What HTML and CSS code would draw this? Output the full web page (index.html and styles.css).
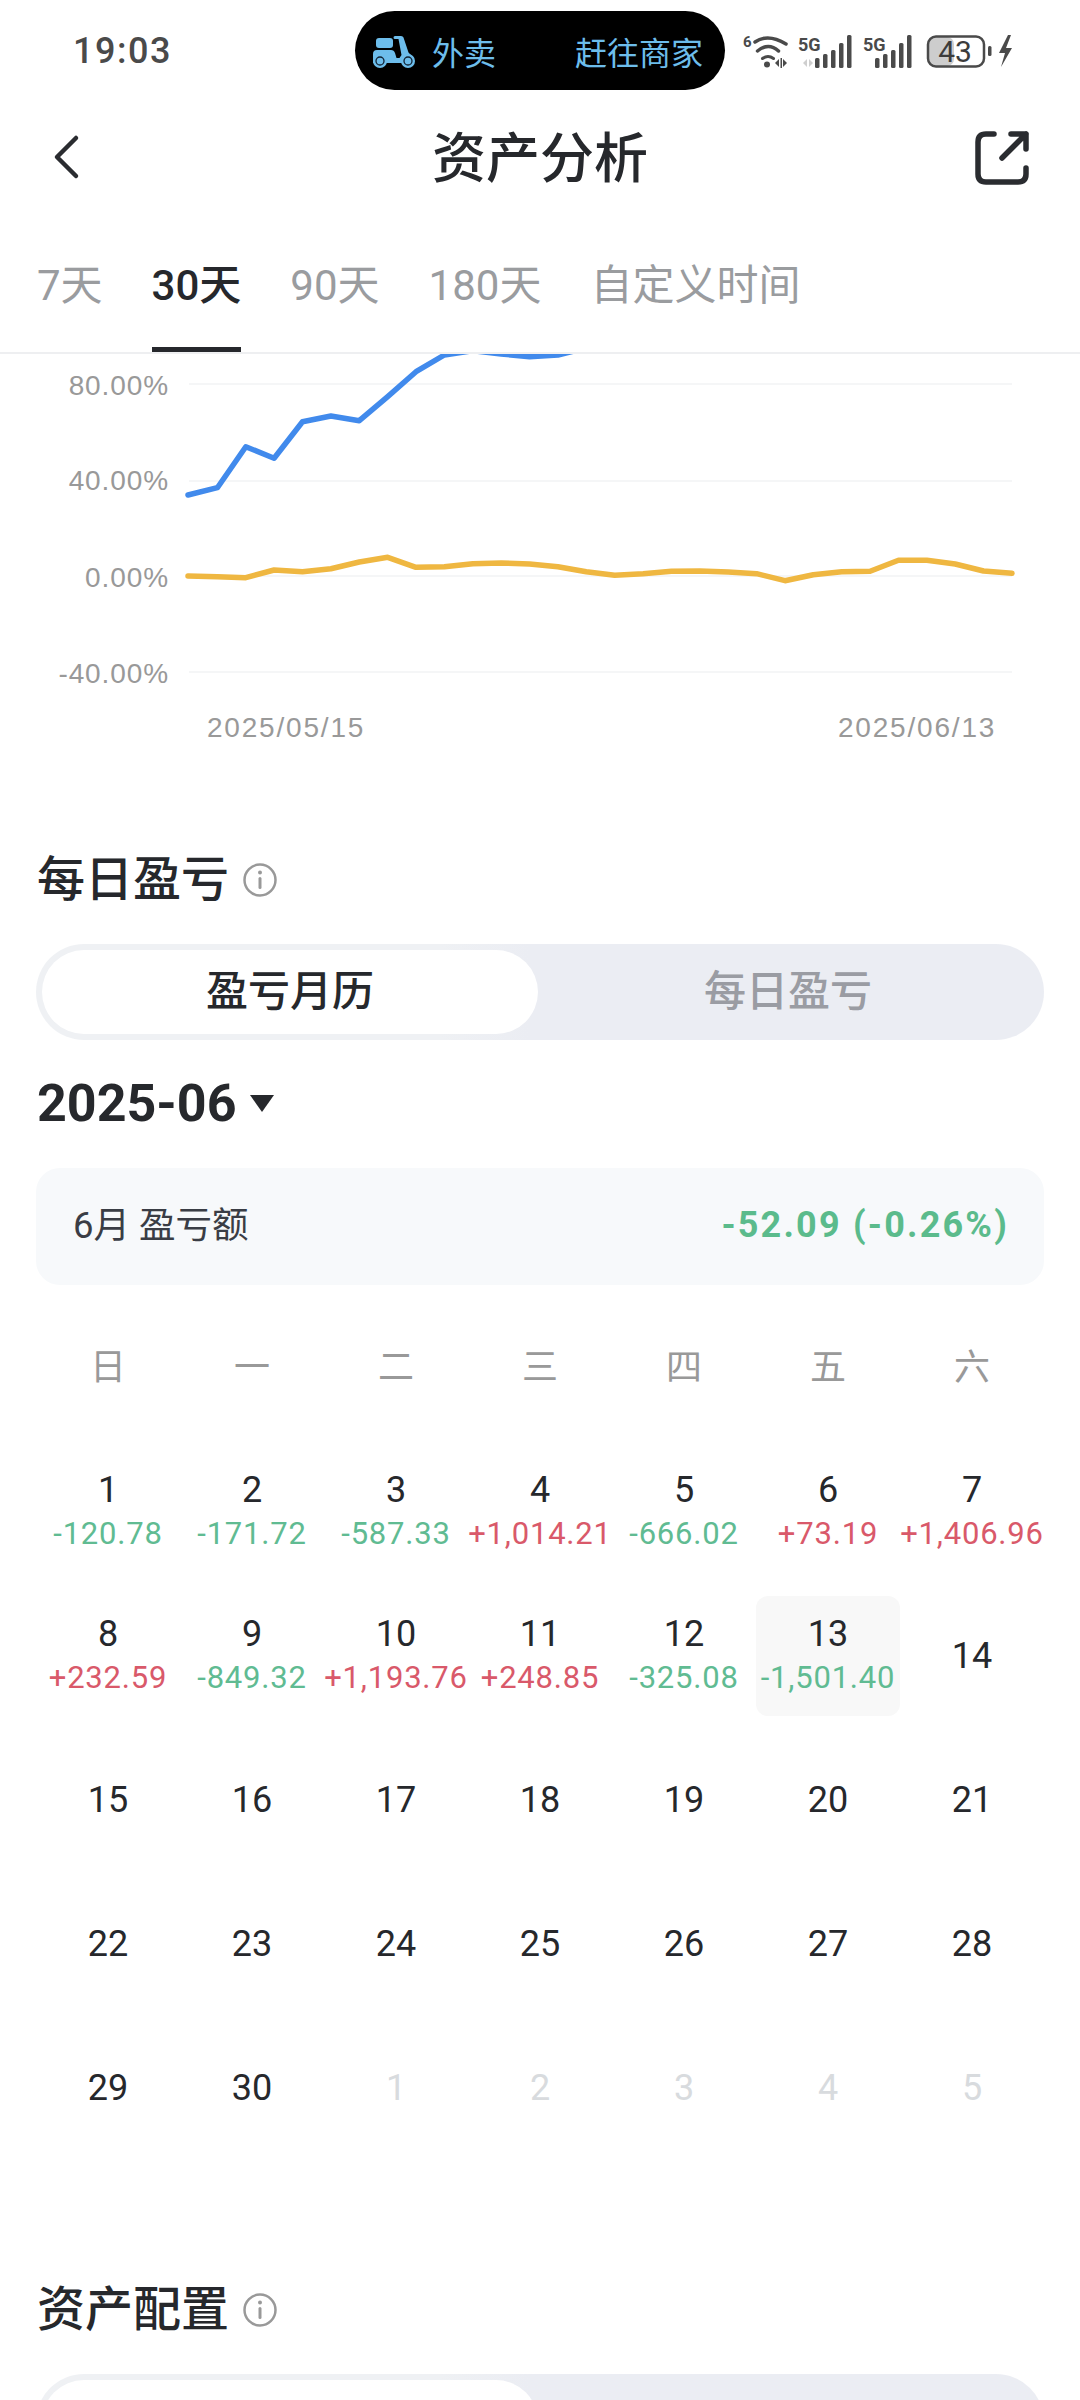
FILE: index.html
```html
<!DOCTYPE html>
<html lang="zh-CN">
<head>
    <meta charset="UTF-8">
    <meta name="viewport" content="width=device-width, initial-scale=1.0">
    <title>资产分析</title>
    <link rel="stylesheet" href="styles.css">
</head>
<body>

    <!-- Status bar -->
    <div class="status-bar">
        <span class="time">19:03</span>
        <div class="pill">
            <span class="pill-left">
                <svg class="scooter" viewBox="373 33 44 34" width="44" height="34">
                    <rect x="376" y="37" width="17" height="10" rx="3" fill="#6dbdeb"/>
                    <path d="M373 62v-9q0-4 4-4h14q3 0 4 3l1.500 5h3l2-3-3-16h-3.500q-1.500 0-1.500-1.500t1.500-1.500h6q2 0 2.500 1.500l5 15 5 5v5.500h-40.500z" fill="#6dbdeb"/>
                    <circle cx="380" cy="60" r="7" fill="#6dbdeb"/>
                    <circle cx="408" cy="60" r="7" fill="#6dbdeb"/>
                    <circle cx="380" cy="60" r="4" fill="none" stroke="#123" stroke-width="1.300"/>
                    <circle cx="408" cy="60" r="4" fill="none" stroke="#123" stroke-width="1.300"/>
                </svg>
                外卖
            </span>
            <span>赶往商家</span>
        </div>
        <svg class="status-icons" viewBox="740 30 275 40" width="275" height="40">
            <text class="net" x="743" y="46" font-size="15">6</text>
            <g fill="none" stroke="#4a4a4a" stroke-linecap="round">
                <path d="M755 41q13-9 31 2" stroke-width="3.500"/>
                <path d="M757.500 50q11-9 21 0" stroke-width="3.500"/>
                <path d="M762.500 57.500q5.500-4 11 0" stroke-width="3"/>
            </g>
            <g fill="#4a4a4a">
                <circle cx="767" cy="63.500" r="3"/>
                <path d="M775 62l4-4v8zM783 58l4 4-4 4z"/>
                <rect x="780.500" y="57" width="1.500" height="10"/>
                <path d="M803 62l4-4v8zM809 58l4 4-4 4z" fill="#cfcfcf"/>
                <rect x="815" y="57" width="4.500" height="10" rx="1.500"/>
                <rect x="823" y="53" width="4.500" height="14" rx="1.500"/>
                <rect x="831" y="49" width="4.500" height="18" rx="1.500"/>
                <rect x="839" y="42" width="4.500" height="25" rx="1.500"/>
                <rect x="847" y="34" width="4.500" height="33" rx="1.500"/>
                <rect x="875" y="57" width="4.500" height="10" rx="1.500"/>
                <rect x="883" y="53" width="4.500" height="14" rx="1.500"/>
                <rect x="891" y="49" width="4.500" height="18" rx="1.500"/>
                <rect x="899" y="42" width="4.500" height="25" rx="1.500"/>
                <rect x="907" y="34" width="4.500" height="33" rx="1.500"/>
                <rect x="988" y="45" width="3.500" height="10" rx="1.500"/>
                <path d="M1008 34l-9 18h6l-4 14 11-19h-6l5-13z"/>
            </g>
            <text class="net" x="798" y="50" font-size="18">5G</text>
            <text class="net" x="863" y="50" font-size="18">5G</text>
            <rect x="929" y="36" width="25" height="29" rx="7" fill="#cdcdcd"/>
            <rect x="928" y="35.500" width="56" height="30" rx="8" fill="none" stroke="#4a4a4a" stroke-width="2.500"/>
            <text class="batt" x="955" y="61" text-anchor="middle" font-size="30">43</text>
        </svg>
    </div>

    <!-- Title row -->
    <div class="nav">
        <svg class="back" viewBox="50 132 30 50" width="30" height="50">
            <path d="M76 137L57 156l19 19" fill="none" stroke="#2a2c30" stroke-width="4.500" stroke-linecap="round" stroke-linejoin="round"/>
        </svg>
        <h1>资产分析</h1>
        <svg class="share" viewBox="970 127 60 60" width="60" height="60">
            <path d="M994 133h-8q-8 0-8 8v32q0 8 8 8h32q8 0 8-8v-6M1011 133h15v15M1026 133l-24 24" fill="none" stroke="#2a2c30" stroke-width="5.500" stroke-linecap="round" stroke-linejoin="round"/>
        </svg>
    </div>

    <!-- Range tabs -->
    <div class="tabs">
        <span class="tab">7天</span>
        <span class="tab active">30天</span>
        <span class="tab">90天</span>
        <span class="tab">180天</span>
        <span class="tab">自定义时间</span>
    </div>

    <!-- Line chart, coordinates are page pixels -->
    <svg class="chart" viewBox="0 354 1080 406" width="1080" height="406">
        <g stroke="#f5f6f7" stroke-width="2">
            <line x1="189" y1="384" x2="1012" y2="384"/>
            <line x1="189" y1="481" x2="1012" y2="481"/>
            <line x1="189" y1="576" x2="1012" y2="576"/>
            <line x1="189" y1="672" x2="1012" y2="672"/>
        </g>
        <g class="axis" text-anchor="end">
            <text x="169" y="395">80.00%</text>
            <text x="169" y="490">40.00%</text>
            <text x="169" y="587">0.00%</text>
            <text x="169" y="683">-40.00%</text>
        </g>
        <text class="axis-date" x="207" y="737">2025/05/15</text>
        <text class="axis-date" x="838" y="737">2025/06/13</text>
        <polyline class="line-blue" points="188,495 217.400,487.700 245.800,446.700 274.100,458.300 302.500,421.700 330.900,416 359.300,420.700 387.700,396.700 416,371.700 444.400,355 472.800,350.700 501.200,354 529.600,356.700 557.900,355 586.300,348"/>
        <polyline class="line-yellow" points="188,576 217.400,576.700 245.800,577.700 274.100,570 302.500,571.700 330.900,568.700 359.300,562 387.700,557.300 416,567.300 444.400,566.700 472.800,563.700 501.200,563 529.600,564 557.900,566.700 586.300,571.700 614.700,575.300 643.100,573.700 671.400,571.300 699.800,571 728.200,572 756.600,573.700 785,580.700 813.300,574.700 841.700,571.700 870.100,571.300 898.500,560.300 926.900,560.300 955.200,564 983.600,571 1012,573.300"/>
    </svg>

    <div class="content">
        <!-- Daily profit and loss -->
        <div class="section-title section-daily">
            <h2>每日盈亏</h2>
            <svg class="info" viewBox="0 0 36 36" width="36" height="36">
                <circle cx="18" cy="18" r="15.500" fill="none" stroke="#999" stroke-width="2.500"/>
                <circle cx="18" cy="10.500" r="2" fill="#999"/>
                <rect x="16.500" y="15" width="3" height="12" rx="1.500" fill="#999"/>
            </svg>
        </div>

        <div class="segment">
            <div class="segment-item active">盈亏月历</div>
            <div class="segment-item">每日盈亏</div>
        </div>

        <div class="month">2025-06<span class="caret"></span></div>

        <div class="summary">
            <span class="summary-label">6月 盈亏额</span>
            <span class="summary-value">-52.09 (-0.26%)</span>
        </div>

        <div class="weekdays">
            <span>日</span><span>一</span><span>二</span><span>三</span><span>四</span><span>五</span><span>六</span>
        </div>

        <div class="days">
            <div class="day"><span class="num">1</span><span class="val down">-120.78</span></div>
            <div class="day"><span class="num">2</span><span class="val down">-171.72</span></div>
            <div class="day"><span class="num">3</span><span class="val down">-587.33</span></div>
            <div class="day"><span class="num">4</span><span class="val up">+1,014.21</span></div>
            <div class="day"><span class="num">5</span><span class="val down">-666.02</span></div>
            <div class="day"><span class="num">6</span><span class="val up">+73.19</span></div>
            <div class="day"><span class="num">7</span><span class="val up">+1,406.96</span></div>

            <div class="day"><span class="num">8</span><span class="val up">+232.59</span></div>
            <div class="day"><span class="num">9</span><span class="val down">-849.32</span></div>
            <div class="day"><span class="num">10</span><span class="val up">+1,193.76</span></div>
            <div class="day"><span class="num">11</span><span class="val up">+248.85</span></div>
            <div class="day"><span class="num">12</span><span class="val down">-325.08</span></div>
            <div class="day today"><span class="num">13</span><span class="val down">-1,501.40</span></div>
            <div class="day"><span class="num">14</span></div>

            <div class="day"><span class="num">15</span></div>
            <div class="day"><span class="num">16</span></div>
            <div class="day"><span class="num">17</span></div>
            <div class="day"><span class="num">18</span></div>
            <div class="day"><span class="num">19</span></div>
            <div class="day"><span class="num">20</span></div>
            <div class="day"><span class="num">21</span></div>

            <div class="day"><span class="num">22</span></div>
            <div class="day"><span class="num">23</span></div>
            <div class="day"><span class="num">24</span></div>
            <div class="day"><span class="num">25</span></div>
            <div class="day"><span class="num">26</span></div>
            <div class="day"><span class="num">27</span></div>
            <div class="day"><span class="num">28</span></div>

            <div class="day"><span class="num">29</span></div>
            <div class="day"><span class="num">30</span></div>
            <div class="day other"><span class="num">1</span></div>
            <div class="day other"><span class="num">2</span></div>
            <div class="day other"><span class="num">3</span></div>
            <div class="day other"><span class="num">4</span></div>
            <div class="day other"><span class="num">5</span></div>
        </div>

        <!-- Asset allocation, cut off by the screen edge -->
        <div class="section-title section-assets">
            <h2>资产配置</h2>
            <svg class="info" viewBox="0 0 36 36" width="36" height="36">
                <circle cx="18" cy="18" r="15.500" fill="none" stroke="#999" stroke-width="2.500"/>
                <circle cx="18" cy="10.500" r="2" fill="#999"/>
                <rect x="16.500" y="15" width="3" height="12" rx="1.500" fill="#999"/>
            </svg>
        </div>

        <div class="segment">
            <div class="segment-item active"></div>
            <div class="segment-item"></div>
        </div>
    </div>

</body>
</html>
```

FILE: styles.css
```css
body, html {
    margin: 0;
    padding: 0;
    background: #fff;
}

body {
    width: 1080px;
    height: 2400px;
    overflow: hidden;
    color: #26282c;
    font-family: Roboto, "Noto Sans CJK SC", sans-serif;
}

h1, h2 {
    margin: 0;
    font-weight: 500;
}

svg {
    display: block;
}

/* Status bar */
.status-bar {
    display: flex;
    align-items: center;
    height: 79px;
    padding: 11px 0 20px 73px;
}

.time {
    width: 282px;
    color: #4a4a4a;
    font-size: 36px;
    font-weight: 500;
    letter-spacing: 1.500px;
}

.pill {
    display: flex;
    align-items: center;
    justify-content: space-between;
    box-sizing: border-box;
    width: 370px;
    height: 79px;
    margin-right: 15px;
    padding: 0 22px 0 18px;
    background: #000;
    border-radius: 40px;
    color: #6dbdeb;
    font-size: 32px;
}

.pill-left {
    display: flex;
    align-items: center;
    gap: 15px;
}

.net {
    fill: #4a4a4a;
    font-family: Roboto, sans-serif;
    font-weight: 700;
}

.batt {
    fill: #3c3c3c;
    font-family: Roboto, sans-serif;
}

/* Title row */
.nav {
    display: grid;
    grid-template-columns: 1fr auto 1fr;
    align-items: center;
    height: 95px;
    padding: 0 50px;
}

.nav h1 {
    padding-top: 4px;
    font-size: 54px;
    line-height: 60px;
}

.share {
    justify-self: end;
}

/* Range tabs */
.tabs {
    display: flex;
    gap: 49px;
    height: 149px;
    padding: 40px 0 0 37px;
    box-sizing: border-box;
    border-bottom: 2px solid #eeeff1;
}

.tab {
    box-sizing: border-box;
    height: 107px;
    color: #9a9c9f;
    font-size: 42px;
    line-height: 82px;
}

.tab.active {
    color: #26282c;
    font-weight: 500;
    border-bottom: 5px solid #26282c;
}

/* Chart */
.axis text,
.axis-date {
    fill: #999;
    font-family: "Liberation Sans", Arial, sans-serif;
    font-size: 28px;
    letter-spacing: 0.900px;
}

.axis-date {
    letter-spacing: 1.800px;
}

.line-blue,
.line-yellow {
    fill: none;
    stroke-width: 5.500px;
    stroke-linejoin: round;
    stroke-linecap: round;
}

.line-blue {
    stroke: #418aec;
}

.line-yellow {
    stroke: #efb741;
}

/* Page body */
.content {
    padding: 0 36px;
}

.section-title {
    display: flex;
    align-items: center;
    gap: 13px;
    height: 60px;
    padding-left: 1px;
}

.section-title h2 {
    font-size: 48px;
    line-height: 60px;
}

.section-daily {
    margin-top: 90px;
}

.section-assets {
    margin-top: 132px;
}

.segment {
    display: flex;
    box-sizing: border-box;
    height: 96px;
    margin-top: 34px;
    padding: 6px;
    background: linear-gradient(90deg, #eff1f4 40%, #ebedf3 49%);
    border-radius: 48px;
}

.segment-item {
    flex: 1;
    color: #9a9ca3;
    font-size: 42px;
    font-weight: 500;
    line-height: 84px;
    text-align: center;
}

.segment-item.active {
    flex: none;
    width: 496px;
    background: #fff;
    border-radius: 42px;
    color: #26282c;
}

.month {
    display: flex;
    align-items: center;
    gap: 13px;
    height: 60px;
    margin-top: 33px;
    padding-left: 1px;
    font-size: 52px;
    font-weight: 700;
}

.caret {
    width: 0;
    height: 0;
    border-left: 12px solid transparent;
    border-right: 12px solid transparent;
    border-top: 17px solid #26282c;
}

.summary {
    display: flex;
    align-items: center;
    justify-content: space-between;
    height: 117px;
    margin-top: 35px;
    padding: 0 37px;
    background: #f7f9fb;
    border-radius: 24px;
    font-size: 36px;
}

.summary-label {
    padding-bottom: 9px;
    color: #3a3d45;
    font-size: 36.500px;
}

.summary-value {
    margin-right: -2px;
    padding-bottom: 3px;
    color: #5bbb8c;
    font-weight: 700;
    letter-spacing: 2.200px;
}

/* Calendar */
.weekdays,
.days {
    display: grid;
    grid-template-columns: repeat(7, 144px);
    text-align: center;
}

.weekdays {
    margin-top: 53px;
    color: #999;
    font-size: 36px;
    line-height: 60px;
}

.days {
    grid-auto-rows: 120px;
    row-gap: 24px;
    margin-top: 54px;
}

.day {
    display: flex;
    flex-direction: column;
    justify-content: center;
    align-items: center;
    border-radius: 12px;
}

.today {
    background: #f8f8f8;
}

.num {
    font-size: 36px;
    line-height: 44px;
}

.other .num {
    color: #d8dbde;
}

.val {
    font-size: 31px;
    line-height: 44px;
    letter-spacing: 0.800px;
    white-space: nowrap;
}

.up {
    color: #d9596a;
}

.down {
    color: #60bb92;
}
```
